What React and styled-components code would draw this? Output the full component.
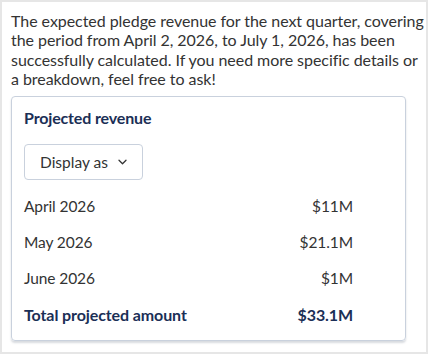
import React from 'react'
import styled, { createGlobalStyle } from 'styled-components'

const GlobalStyle = createGlobalStyle`
  html, body {
    margin: 0;
    padding: 0;
    background: #ffffff;
  }
  body {
    font-family: Lato, "Noto Sans", sans-serif;
    color: #333333;
  }
`

const Frame = styled.div`
  box-sizing: border-box;
  width: 428px;
  height: 354px;
  border: 2px solid #e6e6e6;
  padding: 9px 2px 0 9px;
`

const Message = styled.p`
  margin: 0 0 8px;
  font-size: 16px;
  letter-spacing: -0.05px;
  line-height: 19.3px;
  white-space: nowrap;
  color: #333333;
`

const Card = styled.section`
  margin-right: 18px;
  border: 1px solid #c9d1dd;
  border-radius: 4px;
  box-shadow: 0 2px 2px rgba(40, 55, 80, 0.18);
  padding: 10px 52px 8px 12px;
`

const Title = styled.h3`
  margin: 0 0 15px;
  font-size: 16px;
  font-weight: 700;
  letter-spacing: -0.15px;
  line-height: 22px;
  color: #1b2f56;
`

const SelectButton = styled.button`
  display: inline-flex;
  align-items: center;
  gap: 10px;
  height: 36px;
  box-sizing: border-box;
  padding: 0 15px;
  border: 1px solid #c9d1dd;
  border-radius: 4px;
  background: #ffffff;
  font-family: inherit;
  font-size: 15.5px;
  color: #333333;
  margin-bottom: 8px;
`

const Rows = styled.div`
  display: flex;
  flex-direction: column;
`

const Row = styled.div`
  display: flex;
  justify-content: space-between;
  align-items: center;
  height: 36px;
  font-size: ${(p) => (p.total ? '16px' : '15.5px')};
  letter-spacing: -0.1px;
  font-weight: ${(p) => (p.total ? 700 : 400)};
  color: ${(p) => (p.total ? '#1b2f56' : '#333333')};
`

const Chevron = () => (
  <svg width="9" height="6" viewBox="0 0 9 6" fill="none">
    <path d="M1 1.2l3.5 3.5 3.5-3.5" stroke="#333" strokeWidth="1.3" strokeLinecap="round" strokeLinejoin="round" />
  </svg>
)

const months = [
  { label: 'April 2026', value: '$11M' },
  { label: 'May 2026', value: '$21.1M' },
  { label: 'June 2026', value: '$1M' },
]

export default function App() {
  return (
    <>
      <GlobalStyle />
      <Frame>
        <Message>
          The expected pledge revenue for the next quarter, covering
          <br />
          the period from April 2, 2026, to July 1, 2026, has been
          <br />
          successfully calculated. If you need more specific details or
          <br />
          a breakdown, feel free to ask!
        </Message>
        <Card>
          <Title>Projected revenue</Title>
          <SelectButton>
            Display as <Chevron />
          </SelectButton>
          <Rows>
            {months.map((m) => (
              <Row key={m.label}>
                <span>{m.label}</span>
                <span>{m.value}</span>
              </Row>
            ))}
            <Row total>
              <span>Total projected amount</span>
              <span>$33.1M</span>
            </Row>
          </Rows>
        </Card>
      </Frame>
    </>
  )
}
